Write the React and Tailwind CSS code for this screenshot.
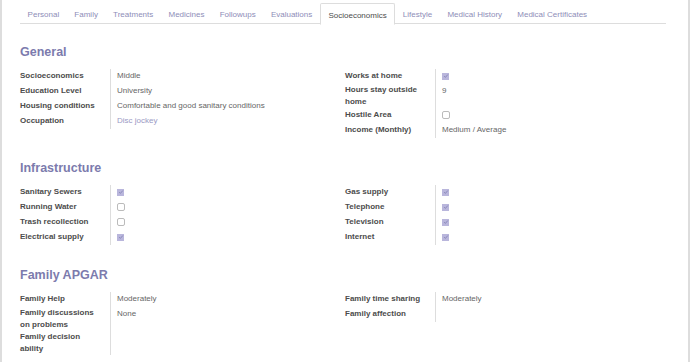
const tabs = ['Personal', 'Family', 'Treatments', 'Medicines', 'Followups', 'Evaluations', 'Socioeconomics', 'Lifestyle', 'Medical History', 'Medical Certificates'];

function Check({ on }) {
  if (on) {
    return (
      <span className="inline-flex w-[7px] h-[7px] bg-[#b9b6dc] items-center justify-center">
        <svg viewBox="0 0 8 8" className="w-[6px] h-[6px]"><path d="M1.5 4.2 L3.2 5.8 L6.5 2" stroke="#7c7bad" strokeWidth="1" fill="none" /></svg>
      </span>
    );
  }
  return <span className="inline-block w-[8px] h-[8px] border border-[#bbb] rounded-[2px] bg-white" />;
}

function Group({ rows, labelW }) {
  return (
    <div className="grid" style={{ gridTemplateColumns: `${labelW}px 1fr` }}>
      {rows.map(([label, value]) => (
        <div key={label} className="contents">
          <div className="flex items-center min-h-[15px] font-bold text-[#4c4c4c] pr-2 leading-[12px]">{label}</div>
          <div className="border-l border-[#ddd] pl-[6px] pt-[1.5px] leading-[12px] text-[#666]">
            {typeof value === 'boolean'
              ? <div className="flex items-center h-[12px]"><Check on={value} /></div>
              : value}
          </div>
        </div>
      ))}
    </div>
  );
}

function Section({ title, left, right, first }) {
  return (
    <div className={first ? 'mt-[16px]' : 'mt-[18.5px]'}>
      <h2 className="text-[12.5px] font-bold text-[#7c7bad] h-[24px] leading-[24px] mb-[4.5px]">{title}</h2>
      <div className="grid grid-cols-2">
        <div className="pr-4">{left}</div>
        <div>{right}</div>
      </div>
    </div>
  );
}

export default function App() {
  return (
    <div className="w-[690px] h-[362px] bg-white border-l-2 border-r-2 border-[#ddd] overflow-hidden text-[8px]" style={{ fontFamily: '"Liberation Sans", Arial, sans-serif' }}>
      <div className="flex mt-[3px] ml-[18px] mr-[22px] border-b border-[#ddd] h-[21px]">
        {tabs.map(t => (
          <div
            key={t}
            className={t === 'Socioeconomics'
              ? 'px-[7.6px] h-[22px] leading-[23px] text-[#4c4c4c] bg-white border border-[#ddd] border-b-white -mb-[1px] rounded-t-[2px]'
              : 'px-[7.6px] leading-[24px] text-[#8e8db8]'}
          >
            {t}
          </div>
        ))}
      </div>
      <div className="px-[18px]">
        <Section
          first
          title="General"
          left={<Group labelW={90} rows={[
            ['Socioeconomics', 'Middle'],
            ['Education Level', 'University'],
            ['Housing conditions', 'Comfortable and good sanitary conditions'],
            ['Occupation', <span className="text-[#9a99c4]">Disc jockey</span>],
          ]} />}
          right={<Group labelW={90} rows={[
            ['Works at home', true],
            ['Hours stay outside home', '9'],
            ['Hostile Area', false],
            ['Income (Monthly)', 'Medium / Average'],
          ]} />}
        />
        <Section
          title="Infrastructure"
          left={<Group labelW={90} rows={[
            ['Sanitary Sewers', true],
            ['Running Water', false],
            ['Trash recollection', false],
            ['Electrical supply', true],
          ]} />}
          right={<Group labelW={90} rows={[
            ['Gas supply', true],
            ['Telephone', true],
            ['Television', true],
            ['Internet', true],
          ]} />}
        />
        <Section
          title="Family APGAR"
          left={<Group labelW={90} rows={[
            ['Family Help', 'Moderately'],
            ['Family discussions on problems', 'None'],
            ['Family decision ability', ''],
          ]} />}
          right={<Group labelW={90} rows={[
            ['Family time sharing', 'Moderately'],
            ['Family affection', ''],
          ]} />}
        />
      </div>
    </div>
  );
}
